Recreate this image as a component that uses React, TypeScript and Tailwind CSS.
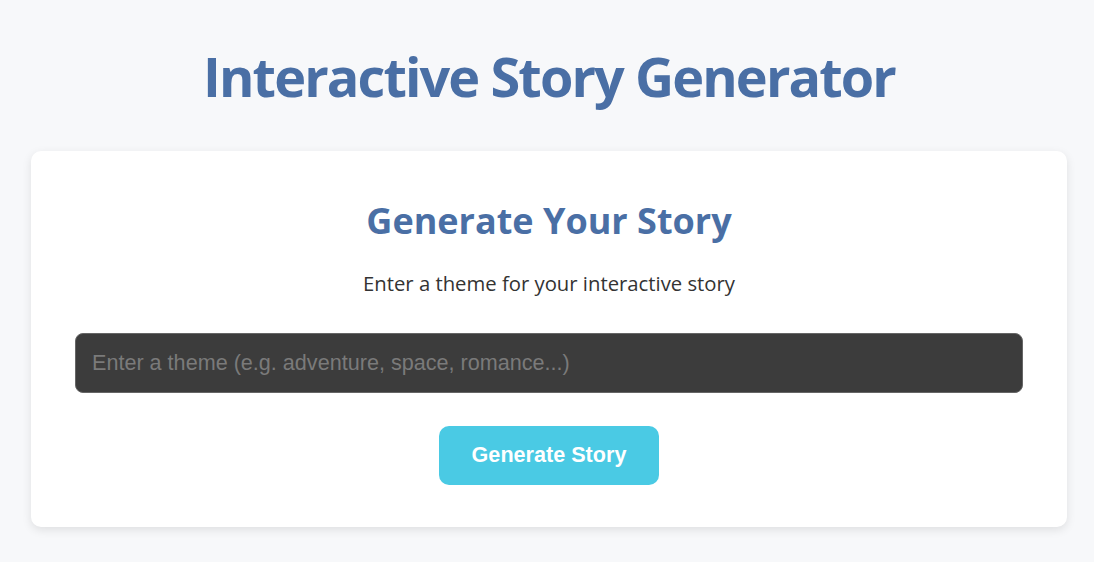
export default function App() {
  return (
    <div className="min-h-[562px] bg-[#f7f8fa] pl-[31px] pr-[27px] pt-[44px] font-['Open_Sans',sans-serif]">
      <h1 className="text-center text-[54px] font-bold leading-[64px] tracking-[-0.035em] text-[#4a6fa5]">
        Interactive Story Generator
      </h1>

      <div className="mt-[43px] rounded-[10px] bg-white px-[44px] pt-[48px] pb-[42px] shadow-[0_3px_10px_rgba(0,0,0,0.1)]">
        <h2 className="text-center text-[36px] font-bold leading-[44px] text-[#4a6fa5]">
          Generate Your Story
        </h2>
        <p className="mt-[26px] text-center text-[20.3px] leading-[28px] text-[#333]">
          Enter a theme for your interactive story
        </p>
        <input
          className="mt-[36px] block h-[60px] w-full rounded-[8px] border border-[#666] bg-[#3c3c3c] px-[16px] font-['Liberation_Sans',Arial,sans-serif] text-[21.6px] text-white outline-none placeholder:text-[#7a7a7a]"
          placeholder="Enter a theme (e.g. adventure, space, romance...)"
        />
        <div className="mt-[33px] flex justify-center">
          <button className="h-[59px] w-[220px] rounded-[10px] bg-[#4acae4] font-['Liberation_Sans',Arial,sans-serif] text-[21.6px] font-bold text-white">
            Generate Story
          </button>
        </div>
      </div>
    </div>
  );
}
